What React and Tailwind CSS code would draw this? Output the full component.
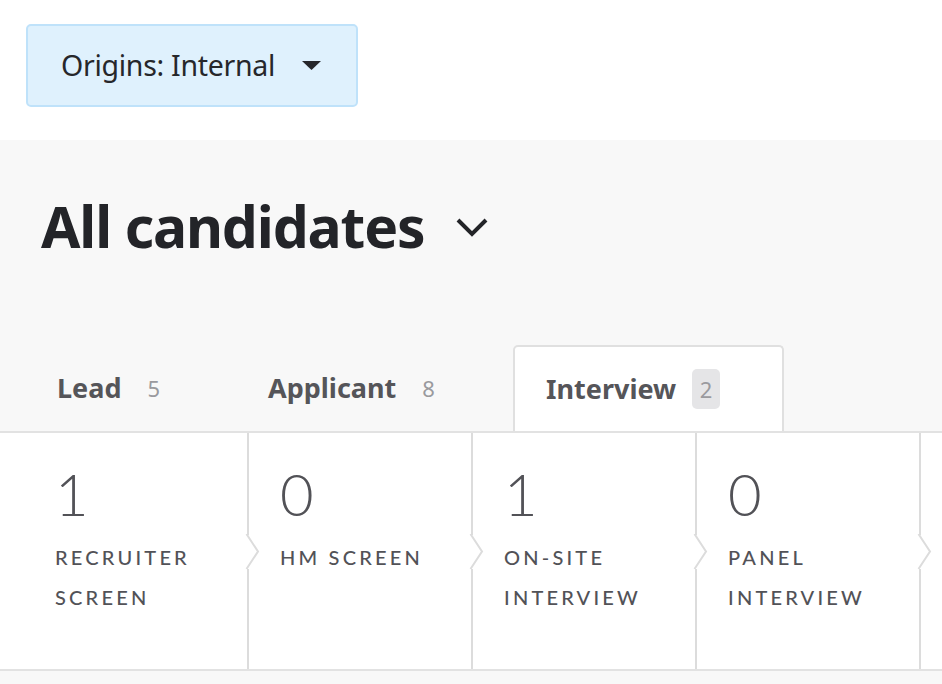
import React from 'react';

const STAGES = [
  { count: 1, label: ['RECRUITER', 'SCREEN'] },
  { count: 0, label: ['HM SCREEN'] },
  { count: 1, label: ['ON-SITE', 'INTERVIEW'] },
  { count: 0, label: ['PANEL', 'INTERVIEW'] },
  { count: null, label: [] },
];

const TABS = [
  { name: 'Lead', count: 5, width: 'w-[167px]' },
  { name: 'Applicant', count: 8, width: 'w-[234px]' },
  { name: 'Interview', count: 2, active: true },
];

function Notch() {
  // arrow notch drawn over the divider between two stages
  return (
    <svg
      className="absolute top-[101px] right-[-14px]"
      width="16"
      height="36"
      viewBox="0 0 16 36"
    >
      <rect x="0" y="1" width="4" height="34" fill="#ffffff" />
      <polyline points="1.5,0 13,17.5 1.5,35" fill="none" stroke="#dcdcdc" strokeWidth="2" />
    </svg>
  );
}

function StageCell({ stage, first }) {
  return (
    <div
      className={`relative shrink-0 w-[224px] h-full border-r-2 border-[#dcdcdc] pt-[32px] ${first ? 'pl-[30px]' : 'pl-[31px]'}`}
    >
      {stage.count !== null && (
        <div className="text-[58px] leading-[58px] font-light text-[#525257]" style={{ fontFamily: 'Lato, sans-serif' }}>
          {stage.count}
        </div>
      )}
      <div
        className="mt-[14px] text-[20px] leading-[40px] font-medium tracking-[0.16em] text-[#525257]"
        style={{ fontFamily: 'Lato, sans-serif' }}
      >
        {stage.label.map((l) => (
          <div key={l}>{l}</div>
        ))}
      </div>
      <Notch />
    </div>
  );
}

export default function App() {
  return (
    <div className="w-[942px] h-[684px] overflow-hidden bg-white" style={{ fontFamily: '"Noto Sans", sans-serif' }}>
      {/* Filter bar */}
      <div className="h-[140px] pt-[24px] pl-[26px]">
        <button className="flex items-center h-[83px] w-[332px] pl-[33px] rounded-[5px] border-2 border-[#bfe2fa] bg-[#dff1fd] text-[#26272b]">
          <span className="text-[28.5px] tracking-[-0.01em]">Origins: Internal</span>
          <svg className="ml-[27px]" width="19" height="10" viewBox="0 0 19 10">
            <polygon points="0,0 19,0 9.5,9" fill="#26272b" />
          </svg>
        </button>
      </div>

      {/* Main */}
      <div className="bg-[#f8f8f8] h-[544px]">
        <div className="flex items-start pl-[41px] pt-[46px] h-[205px]">
          <h1 className="text-[57px] leading-[80px] font-bold tracking-[-0.02em] text-[#232428]">All candidates</h1>
          <svg className="ml-[30px] mt-[30px]" width="34" height="22" viewBox="0 0 34 22">
            <polyline points="3,4 17,18 31,4" fill="none" stroke="#232428" strokeWidth="4" />
          </svg>
        </div>

        {/* Tabs */}
        <div className="flex items-end pl-[25px] h-[86px]">
          {TABS.map((t, i) =>
            t.active ? (
              <div
                key={t.name}
                className="flex items-center h-[86px] w-[271px] ml-[43px] px-[31px] bg-white border-2 border-b-0 border-[#e0e0e0] rounded-t-[5px]"
              >
                <span className="text-[27px] font-bold text-[#555559]">{t.name}</span>
                <span className="ml-[16px] h-[40px] w-[28px] flex items-center justify-center rounded-[5px] bg-[#e5e5e7] text-[22px] text-[#9a9a9e]">
                  {t.count}
                </span>
              </div>
            ) : (
              <div
                key={t.name}
                className={`flex items-center h-[86px] px-[32px] ${t.width} ${i > 0 ? 'ml-[44px]' : ''}`}
              >
                <span className="text-[27px] font-bold text-[#555559]">{t.name}</span>
                <span className="ml-[26px] text-[22px] text-[#9a9a9e]">{t.count}</span>
              </div>
            )
          )}
        </div>

        {/* Stages */}
        <div className="flex h-[240px] bg-white border-y-2 border-[#e2e2e2] pl-[25px] overflow-hidden">
          {STAGES.map((s, i) => (
            <StageCell key={i} stage={s} first={i === 0} />
          ))}
        </div>
      </div>
    </div>
  );
}
